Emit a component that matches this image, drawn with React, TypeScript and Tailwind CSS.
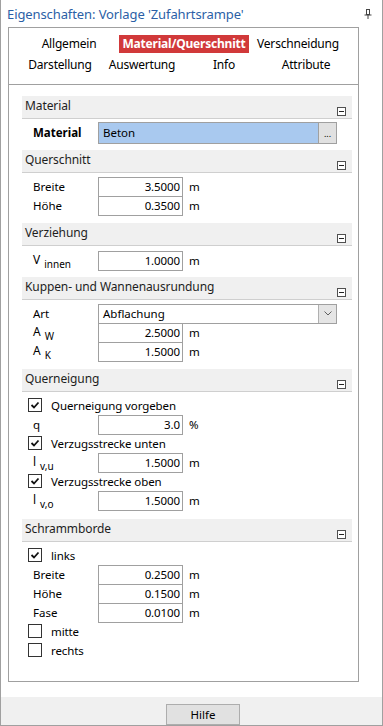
import { ReactNode } from "react";

const font = { fontFamily: '"Noto Sans", "Open Sans", sans-serif' };

const Minus = () => (
  <span className="w-[9px] h-[9px] border border-[#505050] bg-white flex items-center justify-center">
    <span className="w-[5px] h-px bg-[#222]" />
  </span>
);

const Header = ({ title }: { title: string }) => (
  <div className="h-[23px] bg-[#f0f0f0] border-b border-[#cfcfcf] flex items-center justify-between pl-[3px] pr-[6px]">
    <span className="text-[12px] tracking-[-0.1px] text-[#1e1e1e] leading-none -mt-[2px]">{title}</span>
    <span className="mt-[10px]">
      <Minus />
    </span>
  </div>
);

const Check = ({ checked, label }: { checked: boolean; label: string }) => (
  <div className="h-[19px] flex items-center pl-[6px]">
    <span className="w-[14px] h-[14px] border border-[#333] bg-white flex items-center justify-center">
      {checked && (
        <svg width="10" height="10" viewBox="0 0 10 10">
          <path d="M1.5 5 L4 7.5 L8.5 2.5" stroke="#111" strokeWidth="1.8" fill="none" />
        </svg>
      )}
    </span>
    <span className="ml-[9px] text-[11.5px] tracking-[-0.1px] text-black leading-none">{label}</span>
  </div>
);

const Row = ({ label, value, unit = "m" }: { label: ReactNode; value: string; unit?: string }) => (
  <div className="h-[19px] flex items-start">
    <span className="w-[76px] pl-[11px] h-[19px] flex items-center text-[11.5px] text-black leading-none">{label}</span>
    <span className="w-[85px] h-[20px] border border-[#a0a0a0] bg-white flex items-center justify-end pr-[2px] text-[11.5px] tracking-[-0.1px] text-black leading-none shrink-0">
      {value}
    </span>
    <span className="ml-[6px] h-[19px] flex items-center text-[11.5px] text-black leading-none">{unit}</span>
  </div>
);

// label with a lowered index, e.g. V innen
const Sub = ({ main, sub }: { main: string; sub: string }) => (
  <span className="text-[12px]">
    {main}
    <span className="relative top-[4px] ml-[4px] text-[10px] leading-none">{sub}</span>
  </span>
);

const tabsTop = [
  { label: "Allgemein", w: "w-[100px]" },
  { label: "Material/Querschnitt", w: "w-[130px]", active: true },
  { label: "Verschneidung", w: "w-[98px]" },
];
const tabsBottom = ["Darstellung", "Auswertung", "Info", "Attribute"];

export default function App() {
  return (
    <div style={font} className="w-[383px] h-[726px] bg-white border-x border-b border-[#a0a0a0] flex flex-col">
      <div className="h-[27px] flex justify-between">
        <span className="pl-[6px] pt-[4px] text-[13px] tracking-[-0.1px] leading-[20px] text-[#2b5fa6]">
          Eigenschaften: Vorlage 'Zufahrtsrampe'
        </span>
        <svg className="mt-[9px] mr-[10px]" width="8" height="10" viewBox="0 0 8 10">
          <rect x="2.5" y="0.5" width="3" height="5" fill="none" stroke="#444" />
          <line x1="0.5" y1="6" x2="7.5" y2="6" stroke="#444" />
          <line x1="4" y1="6" x2="4" y2="10" stroke="#444" />
        </svg>
      </div>

      <div className="ml-[7px] w-[351px] h-[656px] border border-[#a0a0a0] flex flex-col">
        <div className="h-[57px] border-b border-[#a0a0a0] pt-[7px] pl-[10px]">
          <div className="flex h-[18px]">
            {tabsTop.map((t) => (
              <div
                key={t.label}
                className={`${t.w} flex items-center justify-center text-[12px] tracking-[-0.2px] leading-none ${
                  t.active ? "bg-[#d1393a] text-white font-bold" : "text-black"
                }`}
              >
                {t.label}
              </div>
            ))}
          </div>
          <div className="flex h-[18px] mt-[3px]">
            {tabsBottom.map((t) => (
              <div key={t} className="w-[82px] flex items-center justify-center text-[12px] tracking-[-0.2px] leading-none text-black">
                {t}
              </div>
            ))}
          </div>
        </div>

        <div className="pl-[13px] pt-[11px]">
          <div className="w-[330px]">
            <Header title="Material" />
            <div className="h-[31px] pt-[3px]">
              <div className="flex items-center h-[22px]">
                <span className="w-[76px] pl-[11px] text-[11.5px] font-bold text-black leading-none">Material</span>
                <div className="w-[239px] h-[22px] border border-[#a0a0a0] flex">
                  <span className="flex-1 bg-[#a9c9ef] flex items-center pl-[4px] text-[11.5px] text-black leading-none">
                    Beton
                  </span>
                  <span className="w-[18px] bg-[#e1e1e1] border-l border-[#a0a0a0] flex items-end justify-center pb-[5px] text-[9px] leading-none text-black">
                    ...
                  </span>
                </div>
              </div>
            </div>

            <Header title="Querschnitt" />
            <div className="h-[50px] pt-[4px]">
              <Row label="Breite" value="3.5000" />
              <Row label="Höhe" value="0.3500" />
            </div>

            <Header title="Verziehung" />
            <div className="h-[31px] pt-[5px]">
              <Row label={<Sub main="V" sub="innen" />} value="1.0000" />
            </div>

            <Header title="Kuppen- und Wannenausrundung" />
            <div className="h-[69px] pt-[4px]">
              <div className="h-[19px] flex items-start">
                <span className="w-[76px] pl-[11px] h-[19px] flex items-center text-[11.5px] text-black leading-none">Art</span>
                <div className="w-[239px] h-[20px] border border-[#a0a0a0] flex">
                  <span className="flex-1 flex items-center pl-[4px] text-[11.5px] text-black leading-none">Abflachung</span>
                  <span className="w-[18px] bg-[#e5e5e5] border-l border-[#b0b0b0] flex items-center justify-center">
                    <svg width="8" height="5" viewBox="0 0 8 5">
                      <path d="M0.5 0.5 L4 4 L7.5 0.5" stroke="#606060" fill="none" />
                    </svg>
                  </span>
                </div>
              </div>
              <Row label={<Sub main="A" sub="W" />} value="2.5000" />
              <Row label={<Sub main="A" sub="K" />} value="1.5000" />
            </div>

            <Header title="Querneigung" />
            <div className="h-[127px] pt-[4px]">
              <Check checked label="Querneigung vorgeben" />
              <Row label="q" value="3.0" unit="%" />
              <Check checked label="Verzugsstrecke unten" />
              <Row label={<Sub main="l" sub="v,u" />} value="1.5000" />
              <Check checked label="Verzugsstrecke oben" />
              <Row label={<Sub main="l" sub="v,o" />} value="1.5000" />
            </div>

            <Header title="Schrammborde" />
            <div className="pt-[4px]">
              <Check checked label="links" />
              <Row label="Breite" value="0.2500" />
              <Row label="Höhe" value="0.1500" />
              <Row label="Fase" value="0.0100" />
              <Check checked={false} label="mitte" />
              <Check checked={false} label="rechts" />
            </div>
          </div>
        </div>
      </div>

      <div className="mt-[15px] flex-1 bg-[#f0f0f0] pt-[4px] pl-[165px]">
        <button className="w-[74px] h-[21px] bg-[#e1e1e1] border border-[#adadad] text-[11.5px] text-black leading-none">
          Hilfe
        </button>
      </div>
    </div>
  );
}
